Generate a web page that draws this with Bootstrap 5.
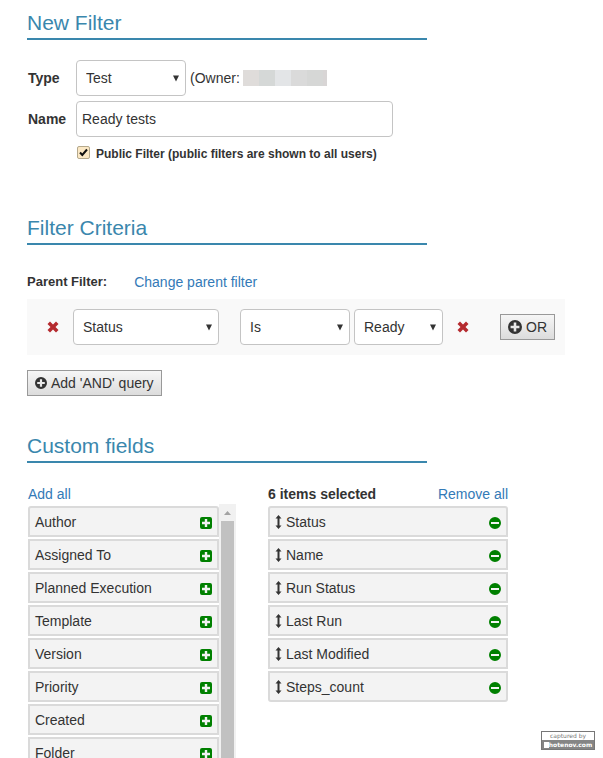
<!DOCTYPE html>
<html lang="en">
<head>
<meta charset="utf-8">
<meta name="viewport" content="width=device-width, initial-scale=1">
<title>New Filter</title>
<link href="https://cdn.jsdelivr.net/npm/bootstrap@5.3.0/dist/css/bootstrap.min.css" rel="stylesheet">
<style>
  body { font-family: "Liberation Sans", Arial, sans-serif; font-size: 14px; line-height: 20px; color: #333; background: #fff; }
  a { color: #337ab7; text-decoration: none; }
  .page { height: 100vh; padding: 11px 38px 0 27px; }
  .section-title { max-width: 400px; margin: 0; padding-bottom: 3px; border-bottom: 2px solid #3a87ad; color: #3a87ad; font-size: 21px; line-height: 24px; font-weight: 400; }
  .fields { max-width: 366px; margin: 20px 0 54px; gap: 5px; }
  .field-label { width: 49px; padding-left: 1px; font-weight: 700; }
  .control { height: 36px; border: 1px solid #c4c4c4; border-radius: 4px; background-color: #fff; color: #333; font-size: 14px; line-height: 20px; }
  .text-control { padding: 0 5px; min-width: 0; }
  .select-control { appearance: none; padding: 0 20px 0 9px; background-repeat: no-repeat; background-position: right 6px center;
    background-image: url("data:image/svg+xml,%3Csvg xmlns='http://www.w3.org/2000/svg' width='6' height='7'%3E%3Cpath fill='%23333' d='M0 0.5h6L3 6.5z'/%3E%3C/svg%3E"); }
  .w-type { width: 110px; }
  .w-field { width: 146px; }
  .w-value { width: 89px; }
  .owner { margin-left: 4px; }
  .redacted { width: 84px; height: 16px; margin-left: 3px; background: linear-gradient(90deg, #dfdcda 0 16px, #d5d8d7 16px 32px, #e3e5e7 32px 48px, #dadada 48px 64px, #d6d7d6 64px 80px, #d8d5d5 80px); }
  .public-row { margin: 4px 0 0 50px; font-size: 12px; line-height: 16px; font-weight: 700; }
  .tick { appearance: none; width: 13px; height: 13px; margin: 0 6px 3px 0; border: 1px solid #b5a98c; border-radius: 2px; background: #fbe8c5; }
  .tick:checked { background-image: url("data:image/svg+xml,%3Csvg xmlns='http://www.w3.org/2000/svg' viewBox='0 0 11 11'%3E%3Cpath fill='none' stroke='%23111' stroke-width='2' d='M2 5.5L4.3 8L9 2.5'/%3E%3C/svg%3E"); }
  .parent-row { margin: 27px 0 7px; gap: 27px; }
  .parent-label { font-size: 13px; font-weight: 700; }
  .criteria { min-height: 56px; padding: 10px 10px 10px 20px; gap: 14px; background: #f9f9f9; }
  .comparison { gap: 4px; margin-left: 7px; }
  .icon-btn { display: flex; padding: 0; border: 0; background: none; }
  .cross { fill: #b52b2f; }
  .gray-btn { display: inline-flex; align-items: center; height: 26px; padding: 0 7px; gap: 4px; border: 1px solid #999; border-radius: 0; background: linear-gradient(#f6f6f6, #dcdcdc); color: #333; }
  .and-btn { margin: 15px 0 38px; }
  .lists { margin: 21px 0 0 1px; gap: 32px; }
  .available { width: 208px; }
  .selected { width: 240px; }
  .item-list { display: flex; flex-direction: column; gap: 2px; padding: 2px 0 0; margin: 0; list-style: none; }
  .item { display: flex; align-items: center; justify-content: space-between; height: 31px; padding: 0 5px; border: 2px solid #dadada; background: #f3f3f3; }
  .item:first-child { border-radius: 3px 3px 0 0; }
  .selected .item:last-child { border-radius: 0 0 3px 3px; }
  .green { fill: #008000; }
  .green-btn { padding-top: 2px; }
  .track { width: 17px; height: 400px; background: #f1f1f1; }
  .thumb { width: 13px; background: #c1c1c1; }
  .stamp { position: absolute; right: 8px; bottom: 8px; width: 54px; border: 1px solid #777; background: #fff; font-family: "DejaVu Sans", sans-serif; font-size: 6px; line-height: 8px; color: #777; text-align: center; }
  .stamp-name { background: #858585; color: #fff; line-height: 9px; font-weight: 700; }
  .stamp-mark { width: 5px; height: 6px; background: #fff; }
</style>
<script src="https://cdn.jsdelivr.net/npm/bootstrap@5.3.0/dist/js/bootstrap.bundle.min.js"></script>
</head>
<body>
<svg class="d-none" aria-hidden="true">
  <symbol id="cross" viewBox="0 0 12 12"><path d="M3 .5L6 3.500L9 .5L11.500 3L8.500 6L11.500 9L9 11.500L6 8.500L3 11.500L.5 9L3.500 6L.5 3z"/></symbol>
  <symbol id="plus-circle" viewBox="0 0 12 12"><path fill-rule="evenodd" d="M6 0a6 6 0 1 0 0 12A6 6 0 0 0 6 0zM4.900 2.200h2.200V4.900h2.700v2.200H7.100v2.700H4.900V7.100H2.200V4.900h2.700z"/></symbol>
  <symbol id="plus-square" viewBox="0 0 12 12"><path fill-rule="evenodd" d="M2 0h8a2 2 0 0 1 2 2v8a2 2 0 0 1-2 2H2a2 2 0 0 1-2-2V2a2 2 0 0 1 2-2zM4.800 2v2.800H2v2.400h2.800V10h2.400V7.200H10V4.800H7.200V2z"/></symbol>
  <symbol id="minus-circle" viewBox="0 0 12 12"><path fill-rule="evenodd" d="M6 0a6 6 0 1 0 0 12A6 6 0 0 0 6 0zM2 4.900h8v2.200H2z"/></symbol>
  <symbol id="arrows-v" viewBox="0 0 6 14"><path d="M3 0L6 3.500H4v7h2L3 14L0 10.500h2v-7H0z"/></symbol>
</svg>
<main class="page position-relative overflow-hidden">
  <h2 class="section-title">New Filter</h2>
  <form class="fields d-flex flex-column">
    <div class="d-flex align-items-center">
      <label class="field-label" for="type">Type</label>
      <select class="control select-control w-type" id="type"><option>Test</option></select>
      <span class="owner">(Owner:</span><span class="redacted"></span>
    </div>
    <div class="d-flex align-items-center">
      <label class="field-label flex-shrink-0" for="name">Name</label>
      <input class="control text-control flex-grow-1" id="name" type="text" value="Ready tests">
    </div>
    <div class="public-row d-flex align-items-center">
      <input class="tick flex-shrink-0" id="public" type="checkbox" checked>
      <label class="text-nowrap" for="public">Public Filter (public filters are shown to all users)</label>
    </div>
  </form>

  <h2 class="section-title">Filter Criteria</h2>
  <div class="parent-row d-flex align-items-center">
    <span class="parent-label">Parent Filter:</span><a href="#">Change parent filter</a>
  </div>
  <div class="criteria d-flex align-items-center">
    <button class="icon-btn" type="button" aria-label="Remove query"><svg class="cross" width="12" height="12"><use href="#cross"/></svg></button>
    <select class="control select-control w-field" aria-label="Field"><option>Status</option></select>
    <div class="comparison d-flex">
      <select class="control select-control w-type" aria-label="Operator"><option>Is</option></select>
      <select class="control select-control w-value" aria-label="Value"><option>Ready</option></select>
    </div>
    <button class="icon-btn" type="button" aria-label="Remove value"><svg class="cross" width="12" height="12"><use href="#cross"/></svg></button>
    <button class="gray-btn ms-auto" type="button"><svg width="14" height="14" fill="#333"><use href="#plus-circle"/></svg>OR</button>
  </div>
  <button class="gray-btn and-btn" type="button"><svg width="12" height="12" fill="#333"><use href="#plus-circle"/></svg>Add 'AND' query</button>

  <h2 class="section-title">Custom fields</h2>
  <div class="lists d-flex align-items-start">
    <section class="available">
      <a class="d-block" href="#">Add all</a>
      <div class="d-flex align-items-start">
        <ul class="item-list flex-grow-1">
          <li class="item">Author<button class="icon-btn green-btn" type="button" aria-label="Add Author"><svg class="green" width="12" height="12"><use href="#plus-square"/></svg></button></li>
          <li class="item">Assigned To<button class="icon-btn green-btn" type="button" aria-label="Add Assigned To"><svg class="green" width="12" height="12"><use href="#plus-square"/></svg></button></li>
          <li class="item">Planned Execution<button class="icon-btn green-btn" type="button" aria-label="Add Planned Execution"><svg class="green" width="12" height="12"><use href="#plus-square"/></svg></button></li>
          <li class="item">Template<button class="icon-btn green-btn" type="button" aria-label="Add Template"><svg class="green" width="12" height="12"><use href="#plus-square"/></svg></button></li>
          <li class="item">Version<button class="icon-btn green-btn" type="button" aria-label="Add Version"><svg class="green" width="12" height="12"><use href="#plus-square"/></svg></button></li>
          <li class="item">Priority<button class="icon-btn green-btn" type="button" aria-label="Add Priority"><svg class="green" width="12" height="12"><use href="#plus-square"/></svg></button></li>
          <li class="item">Created<button class="icon-btn green-btn" type="button" aria-label="Add Created"><svg class="green" width="12" height="12"><use href="#plus-square"/></svg></button></li>
          <li class="item">Folder<button class="icon-btn green-btn" type="button" aria-label="Add Folder"><svg class="green" width="12" height="12"><use href="#plus-square"/></svg></button></li>
        </ul>
        <div class="track d-flex flex-column align-items-center flex-shrink-0">
          <svg width="17" height="17" fill="#a3a3a3"><path d="M5 11L8.500 7L12 11z"/></svg>
          <div class="thumb flex-grow-1"></div>
        </div>
      </div>
    </section>
    <section class="selected">
      <div class="d-flex justify-content-between"><strong>6 items selected</strong><a href="#">Remove all</a></div>
      <ul class="item-list">
        <li class="item"><span class="d-flex align-items-center gap-1"><svg width="7" height="14" fill="#333"><use href="#arrows-v"/></svg>Status</span><button class="icon-btn green-btn" type="button" aria-label="Remove Status"><svg class="green" width="12" height="12"><use href="#minus-circle"/></svg></button></li>
        <li class="item"><span class="d-flex align-items-center gap-1"><svg width="7" height="14" fill="#333"><use href="#arrows-v"/></svg>Name</span><button class="icon-btn green-btn" type="button" aria-label="Remove Name"><svg class="green" width="12" height="12"><use href="#minus-circle"/></svg></button></li>
        <li class="item"><span class="d-flex align-items-center gap-1"><svg width="7" height="14" fill="#333"><use href="#arrows-v"/></svg>Run Status</span><button class="icon-btn green-btn" type="button" aria-label="Remove Run Status"><svg class="green" width="12" height="12"><use href="#minus-circle"/></svg></button></li>
        <li class="item"><span class="d-flex align-items-center gap-1"><svg width="7" height="14" fill="#333"><use href="#arrows-v"/></svg>Last Run</span><button class="icon-btn green-btn" type="button" aria-label="Remove Last Run"><svg class="green" width="12" height="12"><use href="#minus-circle"/></svg></button></li>
        <li class="item"><span class="d-flex align-items-center gap-1"><svg width="7" height="14" fill="#333"><use href="#arrows-v"/></svg>Last Modified</span><button class="icon-btn green-btn" type="button" aria-label="Remove Last Modified"><svg class="green" width="12" height="12"><use href="#minus-circle"/></svg></button></li>
        <li class="item"><span class="d-flex align-items-center gap-1"><svg width="7" height="14" fill="#333"><use href="#arrows-v"/></svg>Steps_count</span><button class="icon-btn green-btn" type="button" aria-label="Remove Steps_count"><svg class="green" width="12" height="12"><use href="#minus-circle"/></svg></button></li>
      </ul>
    </section>
  </div>
  <div class="stamp">
    <div>captured by</div>
    <div class="stamp-name d-flex align-items-center justify-content-center"><span class="stamp-mark"></span>hotenov.com</div>
  </div>
</main>
</body>
</html>
